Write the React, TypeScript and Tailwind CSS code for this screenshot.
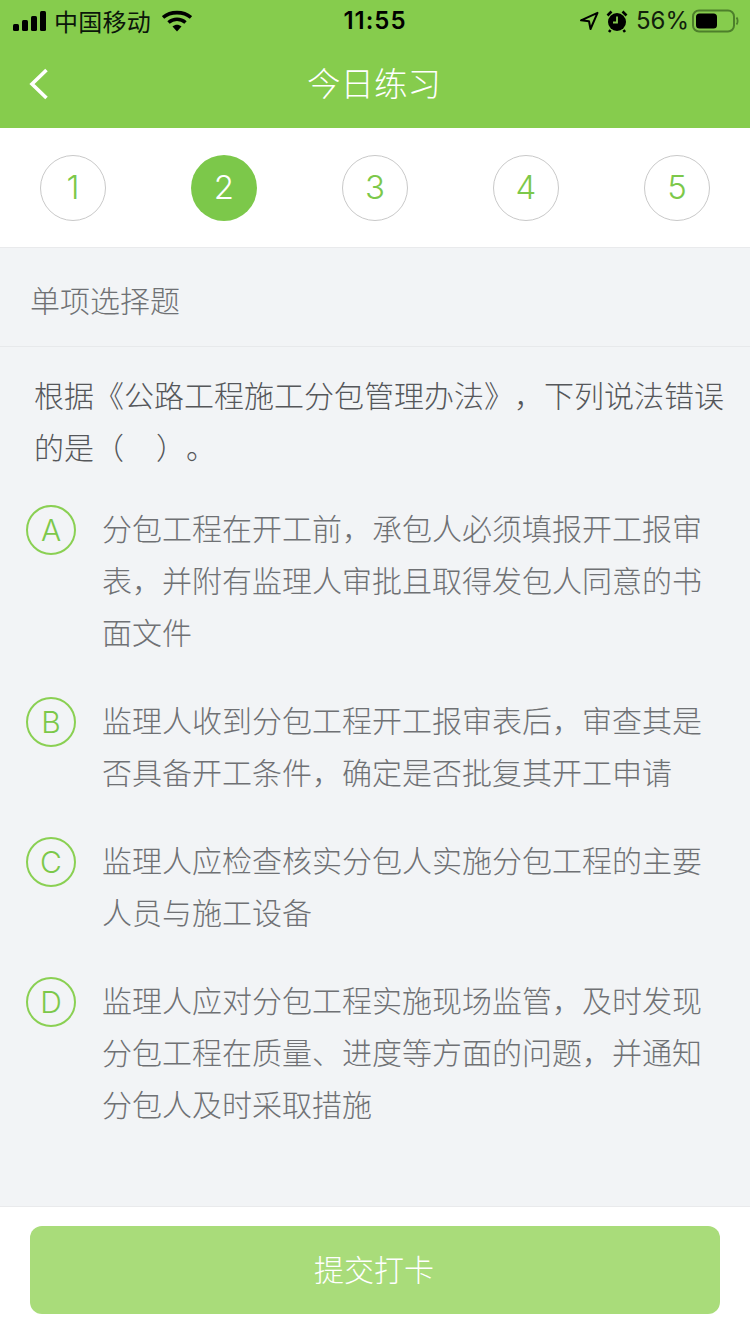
import React from "react";

const font = { fontFamily: '"Noto Sans CJK SC", "Noto Sans", sans-serif' };
const latin = { fontFamily: 'Inter, "Noto Sans CJK SC", sans-serif' };

const options: { key: string; lines: string[]; gap: string }[] = [
  { key: "A", lines: ["分包工程在开工前，承包人必须填报开工报审", "表，并附有监理人审批且取得发包人同意的书", "面文件"], gap: "mb-[36px]" },
  { key: "B", lines: ["监理人收到分包工程开工报审表后，审查其是", "否具备开工条件，确定是否批复其开工申请"], gap: "mb-[36px]" },
  { key: "C", lines: ["监理人应检查核实分包人实施分包工程的主要", "人员与施工设备"], gap: "mb-[36px]" },
  { key: "D", lines: ["监理人应对分包工程实施现场监管，及时发现", "分包工程在质量、进度等方面的问题，并通知", "分包人及时采取措施"], gap: "" },
];

function StatusBar() {
  return (
    <div className="flex h-[40px] items-center justify-between pl-[13px] pr-[13px] pt-[2px] text-[#0b160a]">
      <div className="flex w-[260px] items-center">
        <svg width="34" height="20" viewBox="0 0 34 20" className="mr-[7px]">
          <rect x="0" y="13" width="6" height="7" rx="1.5" fill="#000" />
          <rect x="9" y="9" width="6" height="11" rx="1.5" fill="#000" />
          <rect x="18" y="5" width="6" height="15" rx="1.5" fill="#000" />
          <rect x="27" y="0" width="6" height="20" rx="1.5" fill="#000" />
        </svg>
        <span className="text-[24px] leading-[30px] tracking-[0.25px]" style={font}>中国移动</span>
        <svg width="30" height="22" viewBox="0 0 30 22" className="ml-[11px]">
          <path d="M1 7.5C8.5 1 21.5 1 29 7.5" fill="none" stroke="#000" strokeWidth="3.6" />
          <path d="M6.5 12.5C11.5 8.2 18.500 8.200 23.500 12.500" fill="none" stroke="#000" strokeWidth="3.6" />
          <path d="M10.500 16.500C13.500 14 16.500 14 19.500 16.500L15 21.500Z" fill="#000" />
        </svg>
      </div>
      <div className="pr-[2px] text-[24px] font-semibold leading-[30px] tracking-[1px] text-black" style={latin}>11:55</div>
      <div className="-mr-[2px] flex w-[260px] items-center justify-end">
        <svg width="20" height="20" viewBox="0 0 20 20" className="mr-[7px]">
          <path d="M18.500 1.800L2 9.300L10 10.300L11.500 18Z" fill="none" stroke="#000" strokeWidth="2" strokeLinejoin="round" />
        </svg>
        <svg width="22" height="24" viewBox="0 0 22 24" className="mr-[8px]">
          <circle cx="11" cy="13" r="9" fill="#000" />
          <path d="M11 7.500V13.500H7" fill="none" stroke="#86cc4d" strokeWidth="1.800" />
          <path d="M1.500 6.500L5.500 2.500M20.500 6.500L16.500 2.500M4.500 21L3 23M17.500 21L19 23" stroke="#000" strokeWidth="2.600" />
        </svg>
        <span className="text-[24px] leading-[30px] text-[#10200c]" style={latin}>56%</span>
        <svg width="47" height="24" viewBox="0 0 47 24" className="ml-[3px]">
          <rect x="1" y="1.500" width="41" height="21" rx="6" fill="none" stroke="#4d7f2b" strokeWidth="2" />
          <rect x="4" y="4.500" width="21" height="15" rx="3.500" fill="#000" />
          <path d="M44.500 8.500C46 10 46 14 44.500 15.500" fill="none" stroke="#4d7f2b" strokeWidth="1.800" />
        </svg>
      </div>
    </div>
  );
}

export default function App() {
  return (
    <div className="flex h-[1334px] w-[750px] flex-col overflow-hidden bg-[#f2f4f6] [text-spacing-trim:space-all]" style={font}>
      <header className="h-[128px] shrink-0 bg-[#86cc4d]">
        <StatusBar />
        <div className="relative flex h-[88px] items-center justify-center pb-[5px]">
          <svg width="22" height="34" viewBox="0 0 22 34" className="absolute left-[28px] top-[27px]">
            <path d="M18.500 3L4 17L18.500 31" fill="none" stroke="#fff" strokeWidth="3.600" />
          </svg>
          <span className="pr-[2px] text-[33.5px] font-light leading-[44px] text-white">今日练习</span>
        </div>
      </header>

      <nav className="flex h-[120px] shrink-0 items-center justify-between border-b border-[#e9eaec] bg-white px-[40px]">
        {[1, 2, 3, 4, 5].map((n) => (
          <div
            key={n}
            className={
              n === 2
                ? "flex h-[66px] w-[66px] items-center justify-center rounded-full bg-[#7cc84a] text-[33px] font-light text-white"
                : "flex h-[66px] w-[66px] items-center justify-center rounded-full border border-[#c9c9c9] text-[33px] font-light text-[#7cc84a]"
            }
            style={latin}
          >
            {n}
          </div>
        ))}
      </nav>

      <main className="flex-1">
        <div className="flex h-[99px] items-center border-b border-[#e7e9eb] pl-[30px] pt-[4px] text-[30px] font-light text-[#6f7174]">
          单项选择题
        </div>
        <div className="px-[34px] pt-[21px] text-[30px] font-light leading-[52px] text-[#55575a]">
          <div className="whitespace-nowrap">根据《公路工程施工分包管理办法》，下列说法错误</div>
          <div className="whitespace-nowrap">
            的是（<span className="inline-block w-[32px]" />）。
          </div>
        </div>
        <div className="pl-[26px] pt-[29px]">
          {options.map((o) => (
            <div key={o.key} className={`flex ${o.gap}`}>
              <div
                className="mt-[4px] flex h-[50px] w-[50px] shrink-0 items-center justify-center rounded-full border-2 border-[#8ad053] text-[30px] font-light text-[#7cc84a]"
                style={latin}
              >
                {o.key}
              </div>
              <div className="ml-[26px] text-[30px] font-light leading-[52px] text-[#6f7174]">
                {o.lines.map((l) => (
                  <div key={l} className="whitespace-nowrap">{l}</div>
                ))}
              </div>
            </div>
          ))}
        </div>
      </main>

      <footer className="h-[128px] shrink-0 border-t border-[#e9eaec] bg-white px-[30px] pt-[19px]">
        <button className="flex h-[88px] w-[690px] items-center justify-center rounded-[12px] bg-[#a9dc7a] pb-[4px] pr-[2px] text-[30px] font-light text-white">
          提交打卡
        </button>
      </footer>
    </div>
  );
}
